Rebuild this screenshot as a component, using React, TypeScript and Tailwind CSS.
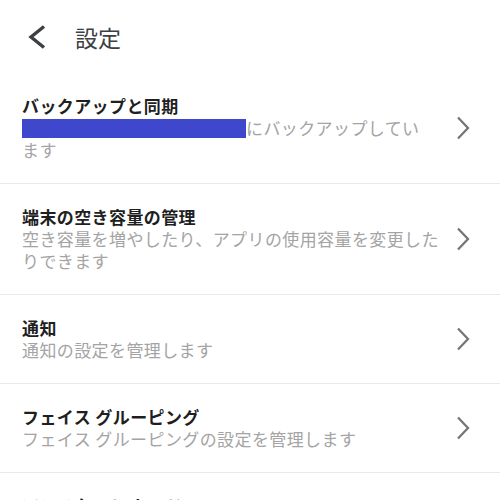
import { ReactNode } from 'react';

const font = { fontFamily: '"Noto Sans CJK JP", "Noto Sans", sans-serif' };

function ChevronRight() {
  return (
    <svg width="14" height="24" viewBox="0 0 14 24" className="shrink-0">
      <polyline points="2,1.5 12,12 2,22.5" fill="none" stroke="#73777c" strokeWidth="2.3" />
    </svg>
  );
}

interface RowProps {
  title: string;
  children?: ReactNode;
}

function Row({ title, children }: RowProps) {
  return (
    <div className="flex items-center border-b border-[#e9e9e9] pl-[22px] pr-[30px] py-[22px]">
      <div className="flex-1 min-w-0 pr-[10px]">
        <div className="text-[17px] leading-[22px] tracking-[0.4px] font-bold text-[#1f1f1f]">{title}</div>
        {children && (
          <div className="text-[17px] leading-[22px] tracking-[0.4px] text-[#a4a4a4]">{children}</div>
        )}
      </div>
      <ChevronRight />
    </div>
  );
}

export default function App() {
  return (
    <div className="w-[500px] h-[500px] overflow-hidden bg-white" style={font}>
      <div className="flex items-center h-[73px] pl-[27px]">
        <svg width="20" height="26" viewBox="0 0 20 26" className="shrink-0">
          <polyline points="17,2.5 4,13 17,23.5" fill="none" stroke="#3c4043" strokeWidth="3.4" />
        </svg>
        <span className="ml-[28px] text-[23px] leading-[30px] text-[#3c4043]">設定</span>
      </div>

      <Row title="バックアップと同期">
        <span className="inline-block align-[-3px] w-[224px] h-[19px] bg-[#3f48cc]" />
        にバックアップしてい
        <br />
        ます
      </Row>
      <Row title="端末の空き容量の管理">空き容量を増やしたり、アプリの使用容量を変更したりできます</Row>
      <Row title="通知">通知の設定を管理します</Row>
      <Row title="フェイス グルーピング">フェイス グルーピングの設定を管理します</Row>
      <Row title="アシスタント カード">アシスタント カードの設定を管理します</Row>
    </div>
  );
}
